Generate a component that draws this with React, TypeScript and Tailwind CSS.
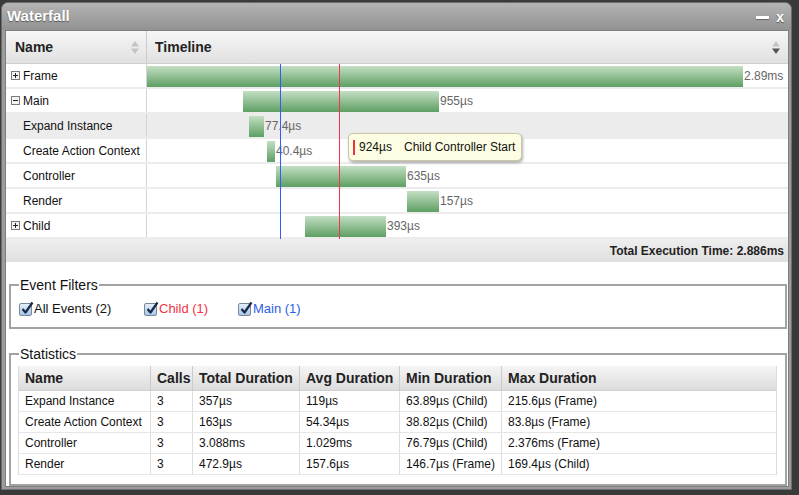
import React from "react";

type Row = { name: string; icon?: "plus" | "minus"; left: number; width: number; label: string; gray?: boolean };

const rows: Row[] = [
  { name: "Frame", icon: "plus", left: 0, width: 596, label: "2.89ms" },
  { name: "Main", icon: "minus", left: 96, width: 196, label: "955µs" },
  { name: "Expand Instance", left: 102, width: 15, label: "77.4µs", gray: true },
  { name: "Create Action Context", left: 120, width: 8, label: "40.4µs" },
  { name: "Controller", left: 129, width: 130, label: "635µs" },
  { name: "Render", left: 260, width: 32, label: "157µs" },
  { name: "Child", icon: "plus", left: 158, width: 81, label: "393µs" },
];

const stats = [
  ["Expand Instance", "3", "357µs", "119µs", "63.89µs (Child)", "215.6µs (Frame)"],
  ["Create Action Context", "3", "163µs", "54.34µs", "38.82µs (Child)", "83.8µs (Frame)"],
  ["Controller", "3", "3.088ms", "1.029ms", "76.79µs (Child)", "2.376ms (Frame)"],
  ["Render", "3", "472.9µs", "157.6µs", "146.7µs (Frame)", "169.4µs (Child)"],
];

function ToggleIcon({ kind }: { kind: "plus" | "minus" }) {
  return (
    <svg width="9" height="9" viewBox="0 0 9 9" className="shrink-0">
      <rect x="0.5" y="0.5" width="8" height="8" fill="#f4f4f4" stroke="#7a7a7a" />
      <rect x="2" y="4" width="5" height="1" fill="#222" />
      {kind === "plus" && <rect x="4" y="2" width="1" height="5" fill="#222" />}
    </svg>
  );
}

function SortArrows({ dark }: { dark?: boolean }) {
  return (
    <svg width="8" height="13" viewBox="0 0 8 13">
      <path d="M4 0 L8 5.5 L0 5.5 Z" fill="#c4c4c4" />
      <path d="M0 7.5 L8 7.5 L4 13 Z" fill={dark ? "#555" : "#c4c4c4"} />
    </svg>
  );
}

function Check() {
  return (
    <span className="relative inline-block w-[13px] h-[13px] shrink-0 rounded-[2px] border border-[#7b8797] bg-linear-to-b from-[#e3eefa] to-[#a8c7ea]">
      <svg width="14" height="14" viewBox="0 0 14 14" className="absolute left-[0px] top-[-3px]">
        <path d="M2.5 8 L5.5 11.5 L12.5 1.5" fill="none" stroke="#1b2a44" strokeWidth="2.2" strokeLinejoin="round" />
      </svg>
    </span>
  );
}

export default function App() {
  return (
    <div className="w-[799px] h-[495px] overflow-hidden bg-[#3a3a3a] pt-[2px] pl-[1px] font-['Liberation_Sans',Arial,sans-serif]">
      <div className="w-[791px] h-[488px] rounded-t-[7px] border border-[#6d6d6d] bg-[#9c9c9c] flex flex-col">
        {/* title bar */}
        <div className="h-[27px] shrink-0 rounded-t-[6px] bg-linear-to-b from-[#b4b4b4] to-[#929292] flex items-center pl-[5px] pr-[5px]">
          <span className="text-[15px] font-bold text-white [text-shadow:0_1px_1px_#555]">Waterfall</span>
          <div className="flex-1" />
          <span className="w-[13px] h-[3px] bg-white mr-[7px] mt-[1px] shadow-[0_1px_1px_#666]" />
          <span className="text-[14px] font-bold text-white leading-none [text-shadow:0_1px_1px_#555] mr-[2px]">x</span>
        </div>
        {/* body */}
        <div className="ml-[3px] mr-[2px] h-[457px] border border-[#7e7e7e] bg-white flex flex-col">
          {/* waterfall grid */}
          <div className="flex flex-col">
            <div className="h-[33px] flex bg-linear-to-b from-[#f6f6f6] to-[#e1e1e1] border-b border-[#cfcfcf]">
              <div className="w-[141px] border-r border-[#cbcbcb] flex items-center pl-[9px] pr-[7px]">
                <span className="text-[14px] font-bold text-[#222] flex-1">Name</span>
                <SortArrows />
              </div>
              <div className="flex-1 flex items-center pl-[8px] pr-[8px]">
                <span className="text-[14px] font-bold text-[#222] flex-1">Timeline</span>
                <SortArrows dark />
              </div>
            </div>
            <div className="relative">
              {rows.map((r) => (
                <div key={r.name} className={`h-[25px] flex border-b-2 border-[#ececec] ${r.gray ? "bg-[#ececec]" : "bg-white"}`}>
                  <div className={`w-[141px] border-r border-[#d4d4d4] flex items-center gap-[3px] ${r.icon ? "pl-[5px]" : "pl-[17px]"}`}>
                    {r.icon && <ToggleIcon kind={r.icon} />}
                    <span className="text-[12px] text-[#111] whitespace-nowrap">{r.name}</span>
                  </div>
                  <div className="flex-1 relative">
                    <div
                      className="absolute top-[2px] h-[21px] bg-linear-to-b from-[#c4dfc4] to-[#5d9f63]"
                      style={{ left: r.left, width: r.width }}
                    />
                    <span
                      className="absolute top-[5px] text-[12px] leading-[14px] text-[#666] whitespace-nowrap"
                      style={{ left: r.left + r.width + 1 }}
                    >
                      {r.label}
                    </span>
                  </div>
                </div>
              ))}
              <div className="absolute top-0 bottom-0 left-[274px] w-0 border-l border-[#2f5bff]" />
              <div className="absolute top-0 bottom-0 left-[333px] w-0 border-l border-[#f5334d]" />
              <div className="absolute left-[342px] top-[69px] w-[174px] h-[28px] rounded-[5px] border border-[#c9c6a8] bg-[#fdfde3] shadow-[1px_2px_3px_rgba(0,0,0,0.3)] flex items-center pl-[4px]">
                <span className="w-[2px] h-[15px] bg-[#f03040] mr-[4px]" />
                <span className="text-[12px] text-[#111] w-[45px]">924µs</span>
                <span className="text-[12px] text-[#111]">Child Controller Start</span>
              </div>
            </div>
            <div className="h-[23px] bg-linear-to-b from-[#eeeeee] to-[#e0e0e0] flex items-center justify-end pr-[4px]">
              <span className="text-[12px] font-bold text-[#222]">Total Execution Time: 2.886ms</span>
            </div>
          </div>

          {/* Event Filters */}
          <fieldset className="mt-[15px] ml-[3px] mr-[1px] border-2 border-[#a2a2a2] px-[8px] pt-[8px] pb-[10px]">
            <legend className="ml-[0px] px-[1px] text-[14px] leading-[16px] text-[#111]">Event Filters</legend>
            <div className="flex items-center h-[16px] text-[13px]">
              <div className="flex items-center gap-[2px] w-[125px]">
                <Check />
                <span className="text-[#111]">All Events (2)</span>
              </div>
              <div className="flex items-center gap-[2px] w-[94px]">
                <Check />
                <span className="text-[#ee3344]">Child (1)</span>
              </div>
              <div className="flex items-center gap-[2px]">
                <Check />
                <span className="text-[#2b5ee6]">Main (1)</span>
              </div>
            </div>
          </fieldset>

          {/* Statistics */}
          <fieldset className="mt-[17px] ml-[3px] mr-[1px] border-2 border-[#a2a2a2] pl-[7px] pr-[8px] pt-[4px] pb-[9px]">
            <legend className="ml-[1px] px-[1px] text-[14px] leading-[16px] text-[#111]">Statistics</legend>
            <div className="border-x border-[#dcdcdc]">
              <div className="h-[25px] grid grid-cols-[132px_42px_107px_100px_102px_1fr] bg-linear-to-b from-[#f5f5f5] to-[#dcdcdc] border-b border-[#cfcfcf]">
                {["Name", "Calls", "Total Duration", "Avg Duration", "Min Duration", "Max Duration"].map((h, i) => (
                  <div key={h} className={`flex items-center pl-[6px] text-[14px] font-bold text-[#222] whitespace-nowrap ${i < 5 ? "border-r border-[#cbcbcb]" : ""}`}>
                    {h}
                  </div>
                ))}
              </div>
              {stats.map((s) => (
                <div key={s[0]} className="h-[21px] grid grid-cols-[132px_42px_107px_100px_102px_1fr] border-b border-[#e6e6e6]">
                  {s.map((c, i) => (
                    <div key={i} className={`flex items-center pl-[6px] text-[12px] text-[#111] whitespace-nowrap ${i < 5 ? "border-r border-[#dedede]" : ""}`}>
                      {c}
                    </div>
                  ))}
                </div>
              ))}
            </div>
          </fieldset>
        </div>
      </div>
    </div>
  );
}
